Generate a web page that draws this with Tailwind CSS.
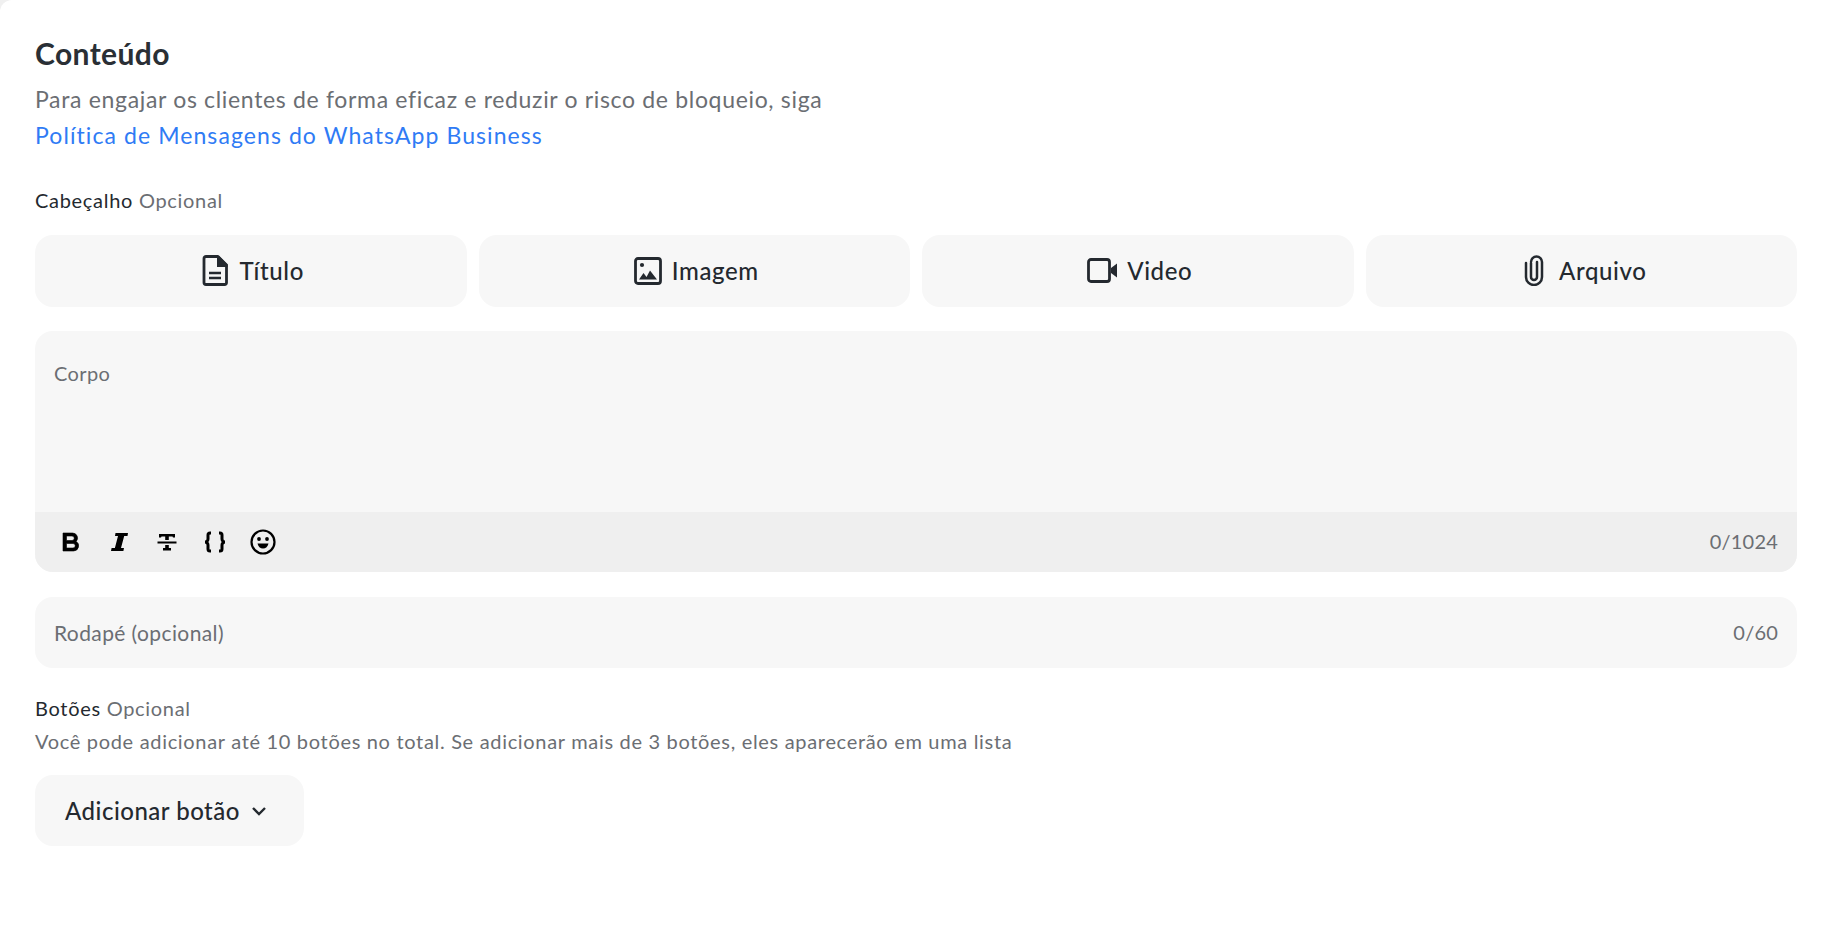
<!DOCTYPE html>
<html lang="pt-BR">
<head>
    <meta charset="UTF-8">
    <title>Conteúdo</title>
    <script src="https://cdn.jsdelivr.net/npm/@tailwindcss/browser@4"></script>
</head>
<body class="bg-[#f0f0f0] font-['Lato','Open_Sans',sans-serif] text-[#24292f]">
    <div class="bg-white w-[1830px] h-[946px] overflow-hidden pl-[35px] pr-[33px] pt-[35px] rounded-tl-[12px]">

        <!-- Title -->
        <h2 class="text-[30px] leading-[36px] font-bold tracking-[0.4px] text-[#2a2f35]">Conteúdo</h2>
        <p class="mt-[10px] text-[23px] leading-[36px] tracking-[0.67px] text-[#6b6e73]">Para engajar os clientes de forma eficaz e reduzir o risco de bloqueio, siga</p>
        <a class="block text-[23px] leading-[36px] tracking-[1.08px] text-[#2f7bf5]">Política de Mensagens do WhatsApp Business</a>

        <!-- Header -->
        <div class="mt-[33px] text-[20px] leading-[28px] tracking-[0.7px]">Cabeçalho <span class="text-[#6b6e73]">Opcional</span></div>
        <div class="mt-[21px] grid grid-cols-4 gap-3">
            <button class="h-[72px] pl-[4px] pb-[1px] rounded-[18px] bg-[#f7f7f7] flex items-center justify-center gap-[12px] text-[24px] tracking-[0.6px] font-medium">
                <svg class="w-[26px] h-[31px]" viewBox="0 0 26 31" fill="none"><path d="M4 1.500h12l8.500 8.500v17.500a2 2 0 0 1-2 2H4a2 2 0 0 1-2-2v-24a2 2 0 0 1 2-2z" stroke="#24292f" stroke-width="2.8" stroke-linejoin="round"/><path d="M15 1h2l8.500 8.500V12H15z" fill="#24292f"/><path d="M7 18h12M7 23h12" stroke="#24292f" stroke-width="2.600"/></svg>
                Título
            </button>
            <button class="h-[72px] pl-[4px] pb-[1px] rounded-[18px] bg-[#f7f7f7] flex items-center justify-center gap-[10px] text-[24px] tracking-[0.6px] font-medium">
                <svg class="w-[28px] h-[28px]" viewBox="0 0 28 28" fill="none"><rect x="1.500" y="1.500" width="25" height="25" rx="2.500" stroke="#24292f" stroke-width="2.8"/><circle cx="8" cy="8" r="2.100" fill="#24292f"/><path d="M5 22.500l4.500-6.500 3 4 3.500-6.500 7 9z" fill="#24292f"/></svg>
                Imagem
            </button>
            <button class="h-[72px] pl-[4px] pb-[1px] rounded-[18px] bg-[#f7f7f7] flex items-center justify-center gap-[9px] text-[24px] tracking-[0.6px] font-medium">
                <svg class="w-[31px] h-[25px]" viewBox="0 0 31 25" fill="none"><rect x="1.500" y="1.500" width="21" height="22" rx="2.500" stroke="#24292f" stroke-width="2.8"/><path d="M24 10l6-4.500v14L24 15z" fill="#24292f"/></svg>
                Video
            </button>
            <button class="h-[72px] pl-[8px] pb-[1px] rounded-[18px] bg-[#f7f7f7] flex items-center justify-center gap-[15px] text-[24px] tracking-[0.6px] font-medium">
                <svg class="w-[20px] h-[31px]" viewBox="0 0 20 31" fill="none"><path d="M7 8v14a3 3 0 0 0 6 0V7M2 8v14a8 8 0 0 0 16 0V7a5.500 5.500 0 0 0-11 0" stroke="#24292f" stroke-width="2.500" stroke-linecap="round"/></svg>
                Arquivo
            </button>
        </div>

        <!-- Body -->
        <div class="mt-[24px] h-[241px] rounded-[18px] bg-[#f7f7f7] overflow-hidden flex flex-col">
            <div class="flex-1 px-[19px] pt-[28px] text-[20px] leading-[28px] tracking-[0.4px] text-[#6b6e73]">Corpo</div>
            <div class="h-[60px] bg-[#efefef] flex items-center justify-between px-[19px]">
                <div class="flex items-center gap-[22px] pl-[4px] text-black">
                    <svg class="w-[26px] h-[26px]" viewBox="0 0 26 26"><path d="M5 4h9.500a5 5 0 0 1 3.700 8.400A5.200 5.200 0 0 1 15.500 22H5zm3.500 3v4.500h5.500a2.250 2.250 0 0 0 0-4.500zm0 7.500V19h6.500a2.250 2.250 0 0 0 0-4.500z" fill="#000" stroke="#000" stroke-width=".6"/></svg>
                    <svg class="w-[26px] h-[26px]" viewBox="0 0 26 26"><path d="M9.500 4h12.500l-.5 3h-3.300L15 19h3l-.6 3H5l.6-3h3.300L12 7H9z" fill="#000"/></svg>
                    <svg class="w-[26px] h-[26px]" viewBox="0 0 26 26"><path d="M5 5h16v3.500h-2l-.5-1h-3.700v3.500h-3.600V7.500H7.500L7 8.500H5zM3.500 12.500h19v2h-19zM11.200 16h3.600v3h2.200v2.500H9V19h2.200z" fill="#000"/></svg>
                    <svg class="w-[26px] h-[26px]" viewBox="0 0 26 26" fill="none" stroke="#000" stroke-width="3"><path d="M9 4H8a2 2 0 0 0-2 2v4a3 3 0 0 1-3 3 3 3 0 0 1 3 3v4a2 2 0 0 0 2 2h1M17 4h1a2 2 0 0 1 2 2v4a3 3 0 0 0 3 3 3 3 0 0 0-3 3v4a2 2 0 0 1-2 2h-1"/></svg>
                    <svg class="w-[26px] h-[26px]" viewBox="0 0 26 26" fill="none"><circle cx="13" cy="13" r="11.500" stroke="#000" stroke-width="2.200"/><circle cx="9" cy="10" r="1.900" fill="#000"/><circle cx="17" cy="10" r="1.900" fill="#000"/><path d="M7.500 14.500h11c-.6 3-2.800 5-5.500 5s-4.900-2-5.500-5z" fill="#000"/></svg>
                </div>
                <span class="pb-[2px] text-[20px] tracking-[0.2px] text-[#6b6e73]">0/1024</span>
            </div>
        </div>

        <!-- Footer -->
        <div class="mt-[25px] h-[71px] rounded-[18px] bg-[#f7f7f7] flex items-center justify-between px-[19px] text-[#6b6e73]">
            <span class="text-[21px] tracking-[0.4px]">Rodapé (opcional)</span>
            <span class="pb-[2px] text-[20px] tracking-[0.2px]">0/60</span>
        </div>

        <!-- Buttons -->
        <div class="mt-[26px] text-[20px] leading-[28px] tracking-[0.7px]">Botões <span class="text-[#6b6e73]">Opcional</span></div>
        <p class="mt-[5px] text-[20px] leading-[28px] tracking-[0.68px] text-[#6b6e73]">Você pode adicionar até 10 botões no total. Se adicionar mais de 3 botões, eles aparecerão em uma lista</p>
        <button class="mt-[20px] w-[269px] h-[71px] rounded-[18px] bg-[#f7f7f7] flex items-center pl-[30px] gap-[11px] text-[24px] tracking-[0.5px] font-medium">
            Adicionar botão
            <svg class="w-[16px] h-[10px]" viewBox="0 0 16 10" fill="none"><path d="M2 2l6 6 6-6" stroke="#24292f" stroke-width="2.400"/></svg>
        </button>
    </div>
</body>
</html>
